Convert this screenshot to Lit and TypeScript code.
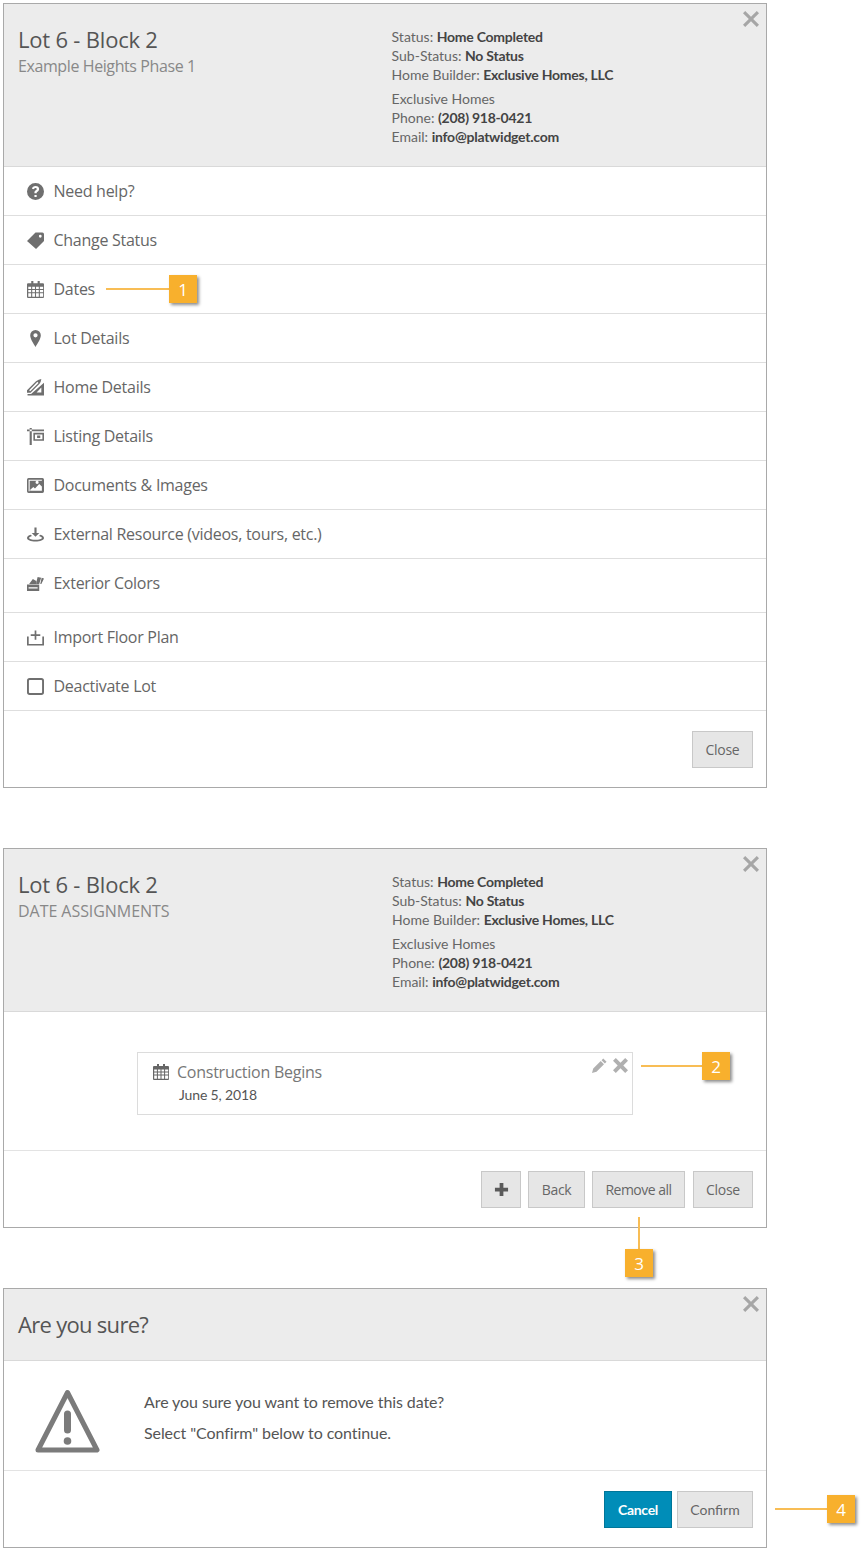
import { LitElement, html, css, svg } from "lit";
import { customElement } from "lit/decorators.js";

const calendar = svg`<path fill-rule="evenodd" d="M4 0h2v2h4V0h2v2h3a1 1 0 0 1 1 1v12a1 1 0 0 1-1 1H1a1 1 0 0 1-1-1V3a1 1 0 0 1 1-1h3zM1.200 5.500v2h2.700v-2zm3.700 0v2h2.600v-2zm3.600 0v2h2.600v-2zm3.600 0v2h3.100v-2zM1.200 8.500v2h2.700v-2zm3.700 0v2h2.600v-2zm3.600 0v2h2.600v-2zm3.600 0v2h3.100v-2zM1.200 11.500v3.300h2.700v-3.300zm3.700 0v3.300h2.600v-3.300zm3.600 0v3.300h2.600v-3.300zm3.600 0v3.300h3.100v-3.300z"/>`;

const icons: Record<string, unknown> = {
  help: svg`<path fill-rule="evenodd" d="M8 0a8 8 0 1 1 0 16A8 8 0 0 1 8 0zM7 11.200v2h2.100v-2zM8.100 2.800c-1.900 0-3.100 1-3.400 2.600l1.900.5c.2-.9.700-1.300 1.400-1.300.7 0 1.200.4 1.200 1 0 .5-.3.8-.9 1.200-1 .7-1.300 1.300-1.300 2.300v.6h2.100v-.4c0-.5.200-.7.800-1.100 1-.7 1.500-1.400 1.500-2.600 0-1.700-1.300-2.800-3.300-2.800z"/>`,
  tag: svg`<path fill-rule="evenodd" d="M8 .5h6.500A1.500 1.500 0 0 1 16 2v6.500l-7.500 7.500L0 8.500zM12.500 2.700a1.300 1.300 0 1 0 0 2.600 1.300 1.300 0 0 0 0-2.600z"/>`,
  calendar,
  marker: svg`<path fill-rule="evenodd" d="M8 0a5 5 0 0 1 5 5C13 8.500 9.500 13.500 8 16 6.500 13.500 3 8.500 3 5a5 5 0 0 1 5-5zm0 3a2 2 0 1 0 0 4 2 2 0 0 0 0-4z"/>`,
  ruler: svg`<path fill-rule="evenodd" d="M0 10.500 8.500 2 11 .8 13.500 0 12.800 2.800 11.800 4.500 3.300 13H0zM2 10.500 3 11.500 10.800 3.700 9.800 2.700zM16 3.500V15.500H.5V14H3.800zM13.500 8 9 12.800H13.500z"/>`,
  listing: svg`<path fill-rule="evenodd" d="M0 1.500h16V3H0zM2.500 0h2v16h-2zM6 4.500h10V12H6zM7.500 6v4.500h7V6zM9.500 7h3v2.500h-3z"/>`,
  image: svg`<path fill-rule="evenodd" d="M1.500 1h13A1.500 1.500 0 0 1 16 2.500v11a1.500 1.500 0 0 1-1.500 1.500h-13A1.500 1.500 0 0 1 0 13.500v-11A1.500 1.500 0 0 1 1.500 1zM3 13h11V9L11.500 6.500 7.500 10.800 6 9.300 3 12zM9.500 3.500a1.500 1.500 0 1 0 0 3 1.500 1.500 0 0 0 0-3zM1.500 2.500v11h1v-10h11.500v-1z"/>`,
  external: svg`<path fill-rule="evenodd" d="M7 1.500h2v5h2.600L8 10.200 4.400 6.500H7zM3.500 8.300l1.200 1.200C3 10 2 10.600 2 11.300c0 .9 2.700 1.700 6 1.700s6-.8 6-1.700c0-.7-1-1.300-2.700-1.800l1.200-1.200c2.100.6 3.500 1.700 3.500 3 0 2-3.600 3.400-8 3.400s-8-1.400-8-3.400c0-1.300 1.400-2.400 3.500-3z"/>`,
  colors: svg`<path fill-rule="evenodd" d="M0 9h11.500v6H0zM1.500 11.500v1.200h8.500v-1.200zM2 8.500 5.500 3.800l4 2.200-.8 2.500zM9 5.800 10 1.800l3.300.9-1.800 5.800H9zM12.500 8.500 13.800 2.500l2.200.8-2.500 5.200z"/>`,
  import: svg`<path d="M7.200 1.500h1.600V5H12.500v1.500H8.800V10H7.200V6.500H3.500V5H7.200zM0 7h1.600v7H14.400V7H16v8.500H0z"/>`,
  square: svg`<path fill-rule="evenodd" d="M2.500 0h11A2.500 2.500 0 0 1 16 2.500v11a2.500 2.500 0 0 1-2.500 2.500h-11A2.500 2.500 0 0 1 0 13.500v-11A2.500 2.500 0 0 1 2.500 0zm0 1.800a.7.7 0 0 0-.7.7v11c0 .4.300.7.700.7h11a.7.7 0 0 0 .7-.7v-11a.7.7 0 0 0-.7-.7z"/>`,
  close: svg`<path d="M2.200 0 8 5.800 13.800 0 16 2.200 10.200 8l5.800 5.800-2.200 2.200L8 10.200 2.200 16 0 13.800 5.800 8 0 2.200z"/>`,
  closeBold: svg`<path d="M3 0 8 5 13 0 16 3 11 8l5 5-3 3-5-5-5 5-3-3 5-5-5-5z"/>`,
  pencil: svg`<path d="M12 .5l3.500 3.500-1.800 1.800-3.500-3.500zM9.300 3.200l3.500 3.500-8 8L0 16l1.300-4.800z"/>`,
  plus: svg`<path d="M6 1h4v5h5v4h-5v5H6v-5H1V6h5z"/>`,
};

const icon = (name: string, cls = "") =>
  html`<svg class="icon ${cls}" viewBox="0 0 16 16" aria-hidden="true">${icons[name]}</svg>`;

const menu: [string, string, string?][] = [
  ["help", "Need help?"],
  ["tag", "Change Status"],
  ["calendar", "Dates"],
  ["marker", "Lot Details"],
  ["ruler", "Home Details"],
  ["listing", "Listing Details"],
  ["image", "Documents & Images"],
  ["external", "External Resource (videos, tours, etc.)"],
  ["colors", "Exterior Colors", "tall"],
  ["import", "Import Floor Plan"],
  ["square", "Deactivate Lot"],
];

@customElement("app-root")
export class AppRoot extends LitElement {
  static styles = css`
    :host {
      display: block;
      position: relative;
      height: 1551px;
      background: #fff;
      color: #555;
      font-family: "Open Sans", "Noto Sans", sans-serif;
      overflow: hidden;
    }
    .page {
      display: flex;
      flex-direction: column;
      padding: 3px 0 0 3px;
      width: 764px;
    }
    .modal {
      position: relative;
      border: 1px solid #a9a9a9;
      background: #fff;
    }
    .m2 { margin-top: 60px; }
    .m3 { margin-top: 60px; }
    .header {
      display: flex;
      height: 163px;
      box-sizing: border-box;
      background: #ececec;
      border-bottom: 1px solid #d9d9d9;
    }
    .titles { flex: none; width: 387.600px; padding: 21px 0 0 14px; box-sizing: border-box; }
    .m2 .titles { width: 388px; }
    h2 {
      margin: 0;
      font-size: 22px;
      line-height: 28px;
      font-weight: 400;
      color: #555;
      letter-spacing: -0.2px;
    }
    .sub {
      font-size: 16px;
      line-height: 22px;
      color: #888;
      margin-top: 2px;
      letter-spacing: -0.4px;
    }
    .m2 .sub { letter-spacing: -0.05px; }
    .info {
      padding-top: 23px;
      font-family: Lato, sans-serif;
      font-size: 14px;
      line-height: 19px;
      color: #666;
    }
    .info p { margin: 0; }
    .info p + p { margin-top: 5px; }
    .info b { color: #444; font-weight: 700; letter-spacing: -0.25px; }
    .x {
      position: absolute;
      top: 7px;
      right: 7px;
      width: 16px;
      height: 16px;
      fill: #a6a6a6;
    }
    .icon { display: block; flex: none; }
    .row {
      display: flex;
      align-items: center;
      height: 48px;
      padding-left: 23px;
      gap: 9.500px;
      border-bottom: 1px solid #dedede;
      font-size: 16px;
      color: #666;
      letter-spacing: -0.27px;
    }
    .row.tall { height: 54px; padding-bottom: 5px; box-sizing: border-box; }
    .row .icon { width: 17px; height: 17px; fill: #6f6f6f; }
    .footer {
      display: flex;
      justify-content: flex-end;
      gap: 7px;
      padding: 20px 13px 19px 0;
    }
    .btn {
      box-sizing: border-box;
      height: 37px;
      display: flex;
      align-items: center;
      justify-content: center;
      background: #e6e6e6;
      border: 1px solid #c8c8c8;
      font-size: 14px;
      color: #666;
      letter-spacing: -0.3px;
    }
    .w-close { width: 61px; }
    .w-close2 { width: 60px; margin-left: 1px; }
    .w-back { width: 57px; }
    .w-remove { width: 93px; letter-spacing: -0.5px; }
    .btn.add { width: 40px; }
    .btn.add .icon { width: 15px; height: 15px; fill: #5a5a5a; }
    .sure-foot { gap: 5px; }
    .btn.primary {
      width: 68px;
      background: #008db8;
      border-color: #007699;
      color: #fff;
      font-family: Lato, sans-serif;
      font-weight: 700;
    }
    .btn.confirm { width: 76px; font-family: Lato, sans-serif; letter-spacing: 0; }
    .assign {
      height: 139px;
      box-sizing: border-box;
      padding: 40px 0 0 133px;
      border-bottom: 1px solid #e3e3e3;
    }
    .card {
      position: relative;
      box-sizing: border-box;
      width: 496px;
      height: 63px;
      border: 1px solid #dcdcdc;
      padding: 9px 15px;
    }
    .card-title {
      display: flex;
      align-items: center;
      gap: 8px;
      font-size: 16px;
      line-height: 20px;
      color: #777;
      letter-spacing: -0.25px;
    }
    .card-title .icon { width: 16px; height: 16px; fill: #666; }
    .card-date {
      font-family: Lato, sans-serif;
      font-size: 14px;
      line-height: 18px;
      color: #555;
      margin: 4px 0 0 26px;
      letter-spacing: -0.15px;
    }
    .tools { position: absolute; top: 5px; right: 4px; display: flex; gap: 6px; }
    .tools .icon { width: 15px; height: 15px; fill: #b0b0b0; }
    .sure-head {
      height: 72px;
      box-sizing: border-box;
      background: #ececec;
      border-bottom: 1px solid #d9d9d9;
      padding: 21px 0 0 14px;
    }
    .sure-head h2 { letter-spacing: -0.7px; }
    .sure-body {
      display: flex;
      height: 110px;
      box-sizing: border-box;
      border-bottom: 1px solid #e3e3e3;
      padding: 28px 0 0 31px;
    }
    .warn { width: 65px; height: 65px; fill: none; stroke: #7b7b7b; flex: none; }
    .sure-text {
      margin: -3px 0 0 44px;
      font-family: Lato, sans-serif;
      font-size: 16px;
      line-height: 31px;
      color: #555;
      letter-spacing: -0.08px;
    }
    .sure-text p { margin: 0; }
    .callout {
      position: absolute;
      box-sizing: border-box;
      width: 28px;
      height: 28px;
      background: #f8b02d;
      color: #fff;
      font-size: 17px;
      display: flex;
      align-items: center;
      justify-content: center;
      box-shadow: 2px 2px 3px rgba(0, 0, 0, 0.45);
    }
    .line { position: absolute; background: #f8bd55; }
    .h { height: 2px; }
    .v { width: 2px; }
  `;

  private header(sub: string) {
    return html`
      <div class="header">
        <div class="titles">
          <h2>Lot 6 - Block 2</h2>
          <div class="sub">${sub}</div>
        </div>
        <div class="info">
          <p>Status: <b>Home Completed</b><br />Sub-Status: <b>No Status</b><br />Home Builder: <b>Exclusive Homes, LLC</b></p>
          <p>Exclusive Homes<br />Phone: <b>(208) 918-0421</b><br />Email: <b>info@platwidget.com</b></p>
        </div>
      </div>
      ${icon("close", "x")}
    `;
  }

  render() {
    return html`
      <div class="page">
        <section class="modal m1">
          ${this.header("Example Heights Phase 1")}
          ${menu.map(
            ([i, label, cls]) => html`
              <div class="row ${cls ?? ""}">${icon(i)}<span>${label}</span></div>
            `
          )}
          <div class="footer"><div class="btn w-close">Close</div></div>
        </section>

        <section class="modal m2">
          ${this.header("DATE ASSIGNMENTS")}
          <div class="assign">
            <div class="card">
              <div class="card-title">${icon("calendar")}Construction Begins</div>
              <div class="card-date">June 5, 2018</div>
              <div class="tools">${icon("pencil")}${icon("closeBold")}</div>
            </div>
          </div>
          <div class="footer">
            <div class="btn add">${icon("plus")}</div>
            <div class="btn w-back">Back</div>
            <div class="btn w-remove">Remove all</div>
            <div class="btn w-close2">Close</div>
          </div>
        </section>

        <section class="modal m3">
          <div class="sure-head"><h2>Are you sure?</h2></div>
          ${icon("close", "x")}
          <div class="sure-body">
            <svg class="warn" viewBox="0 0 65 65" aria-hidden="true">
              <path d="M32.500 3.500 L62 61 H3 Z" stroke-width="5" stroke-linejoin="round"></path>
              <path d="M32.500 25 V41" stroke-width="7" stroke-linecap="round"></path>
              <circle cx="32.500" cy="52" r="3.800" fill="#7b7b7b" stroke="none"></circle>
            </svg>
            <div class="sure-text">
              <p>Are you sure you want to remove this date?</p>
              <p>Select "Confirm" below to continue.</p>
            </div>
          </div>
          <div class="footer sure-foot">
            <div class="btn primary">Cancel</div>
            <div class="btn confirm">Confirm</div>
          </div>
        </section>
      </div>

      <div class="line h" style="left:106px;top:288px;width:64px"></div>
      <div class="callout" style="left:169px;top:275px">1</div>
      <div class="line h" style="left:641px;top:1065px;width:62px"></div>
      <div class="callout" style="left:702px;top:1052px">2</div>
      <div class="line v" style="left:638px;top:1217px;height:33px"></div>
      <div class="callout" style="left:625px;top:1249px">3</div>
      <div class="line h" style="left:775px;top:1508px;width:54px"></div>
      <div class="callout" style="left:827px;top:1495px">4</div>
    `;
  }
}
